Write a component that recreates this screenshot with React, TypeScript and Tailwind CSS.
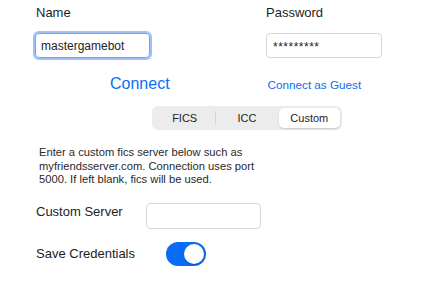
import React, { useState } from 'react';

export default function App() {
  const [name, setName] = useState<string>('mastergamebot');
  const [password, setPassword] = useState<string>('*********');
  const [server, setServer] = useState<string>('');
  const [tab, setTab] = useState<string>('Custom');
  const [save, setSave] = useState<boolean>(true);

  const tabs = ['FICS', 'ICC', 'Custom'];

  return (
    <div
      className="w-[430px] h-[290px] bg-white text-[#1d1d1f] overflow-hidden"
      style={{ fontFamily: '"Liberation Sans", Arial, sans-serif' }}
    >
      {/* Labels */}
      <div className="flex pt-[5px] text-[13px] leading-[15px]">
        <span className="ml-[36px] w-[230px]">Name</span>
        <span>Password</span>
      </div>

      {/* Inputs */}
      <div className="flex mt-[13px]">
        <input
          value={name}
          onChange={(e) => setName(e.target.value)}
          className="ml-[35px] w-[115px] h-[25px] px-[5px] text-[12px] border border-[#6fa3f3] rounded-[4px] outline-none ring-[2px] ring-[#9fc1f7]"
        />
        <input
          value={password}
          onChange={(e) => setPassword(e.target.value)}
          className="ml-[116px] w-[116px] h-[25px] px-[6px] pt-[3px] text-[12px] tracking-[0.5px] border border-[#d6d6d6] rounded-[4px] outline-none"
        />
      </div>

      {/* Links */}
      <div className="flex items-baseline mt-[16px] leading-[20px]">
        <button className="ml-[110px] text-[16px] text-[#0a6cf5]">Connect</button>
        <button className="ml-[98px] text-[11.7px] text-[#0a6cf5]">Connect as Guest</button>
      </div>

      {/* Segmented control */}
      <div className="ml-[152px] mt-[11px] w-[190px] h-[24px] bg-[#ececec] rounded-[6px] p-[2px] flex items-center">
        {tabs.map((t, idx) => (
          <React.Fragment key={t}>
            {idx > 0 && (
              <div
                className={`w-px h-[14px] ${
                  tab === t || tab === tabs[idx - 1] ? 'bg-transparent' : 'bg-[#d4d4d4]'
                }`}
              />
            )}
            <button
              onClick={() => setTab(t)}
              className={`flex-1 h-full text-[11px] font-medium rounded-[5px] ${
                tab === t ? 'bg-white shadow-[0_1px_2px_rgba(0,0,0,0.15)]' : ''
              }`}
            >
              {t}
            </button>
          </React.Fragment>
        ))}
      </div>

      {/* Help text */}
      <p className="ml-[39px] mt-[16px] w-[222px] text-[11.2px] leading-[13.5px] text-[#2a2a2a]">
        Enter a custom fics server below such as myfriendsserver.com. Connection uses port 5000. If left blank, fics will be used.
      </p>

      {/* Custom server */}
      <div className="flex items-center mt-[16px]">
        <span className="ml-[36px] w-[110px] text-[13px] -mt-[8px]">Custom Server</span>
        <input
          value={server}
          onChange={(e) => setServer(e.target.value)}
          className="w-[115px] h-[26px] px-[6px] text-[12px] border border-[#d6d6d6] rounded-[4px] outline-none"
        />
      </div>

      {/* Save credentials */}
      <div className="flex items-center mt-[13px]">
        <span className="ml-[36px] w-[130px] text-[13px]">Save Credentials</span>
        <button
          onClick={() => setSave(!save)}
          className={`w-[40px] h-[24px] rounded-full p-[2px] flex ${
            save ? 'bg-[#0a6cf5] justify-end' : 'bg-[#e5e5ea] justify-start'
          }`}
        >
          <span className="w-[20px] h-[20px] rounded-full bg-white shadow-[0_1px_2px_rgba(0,0,0,0.25)]" />
        </button>
      </div>
    </div>
  );
}
